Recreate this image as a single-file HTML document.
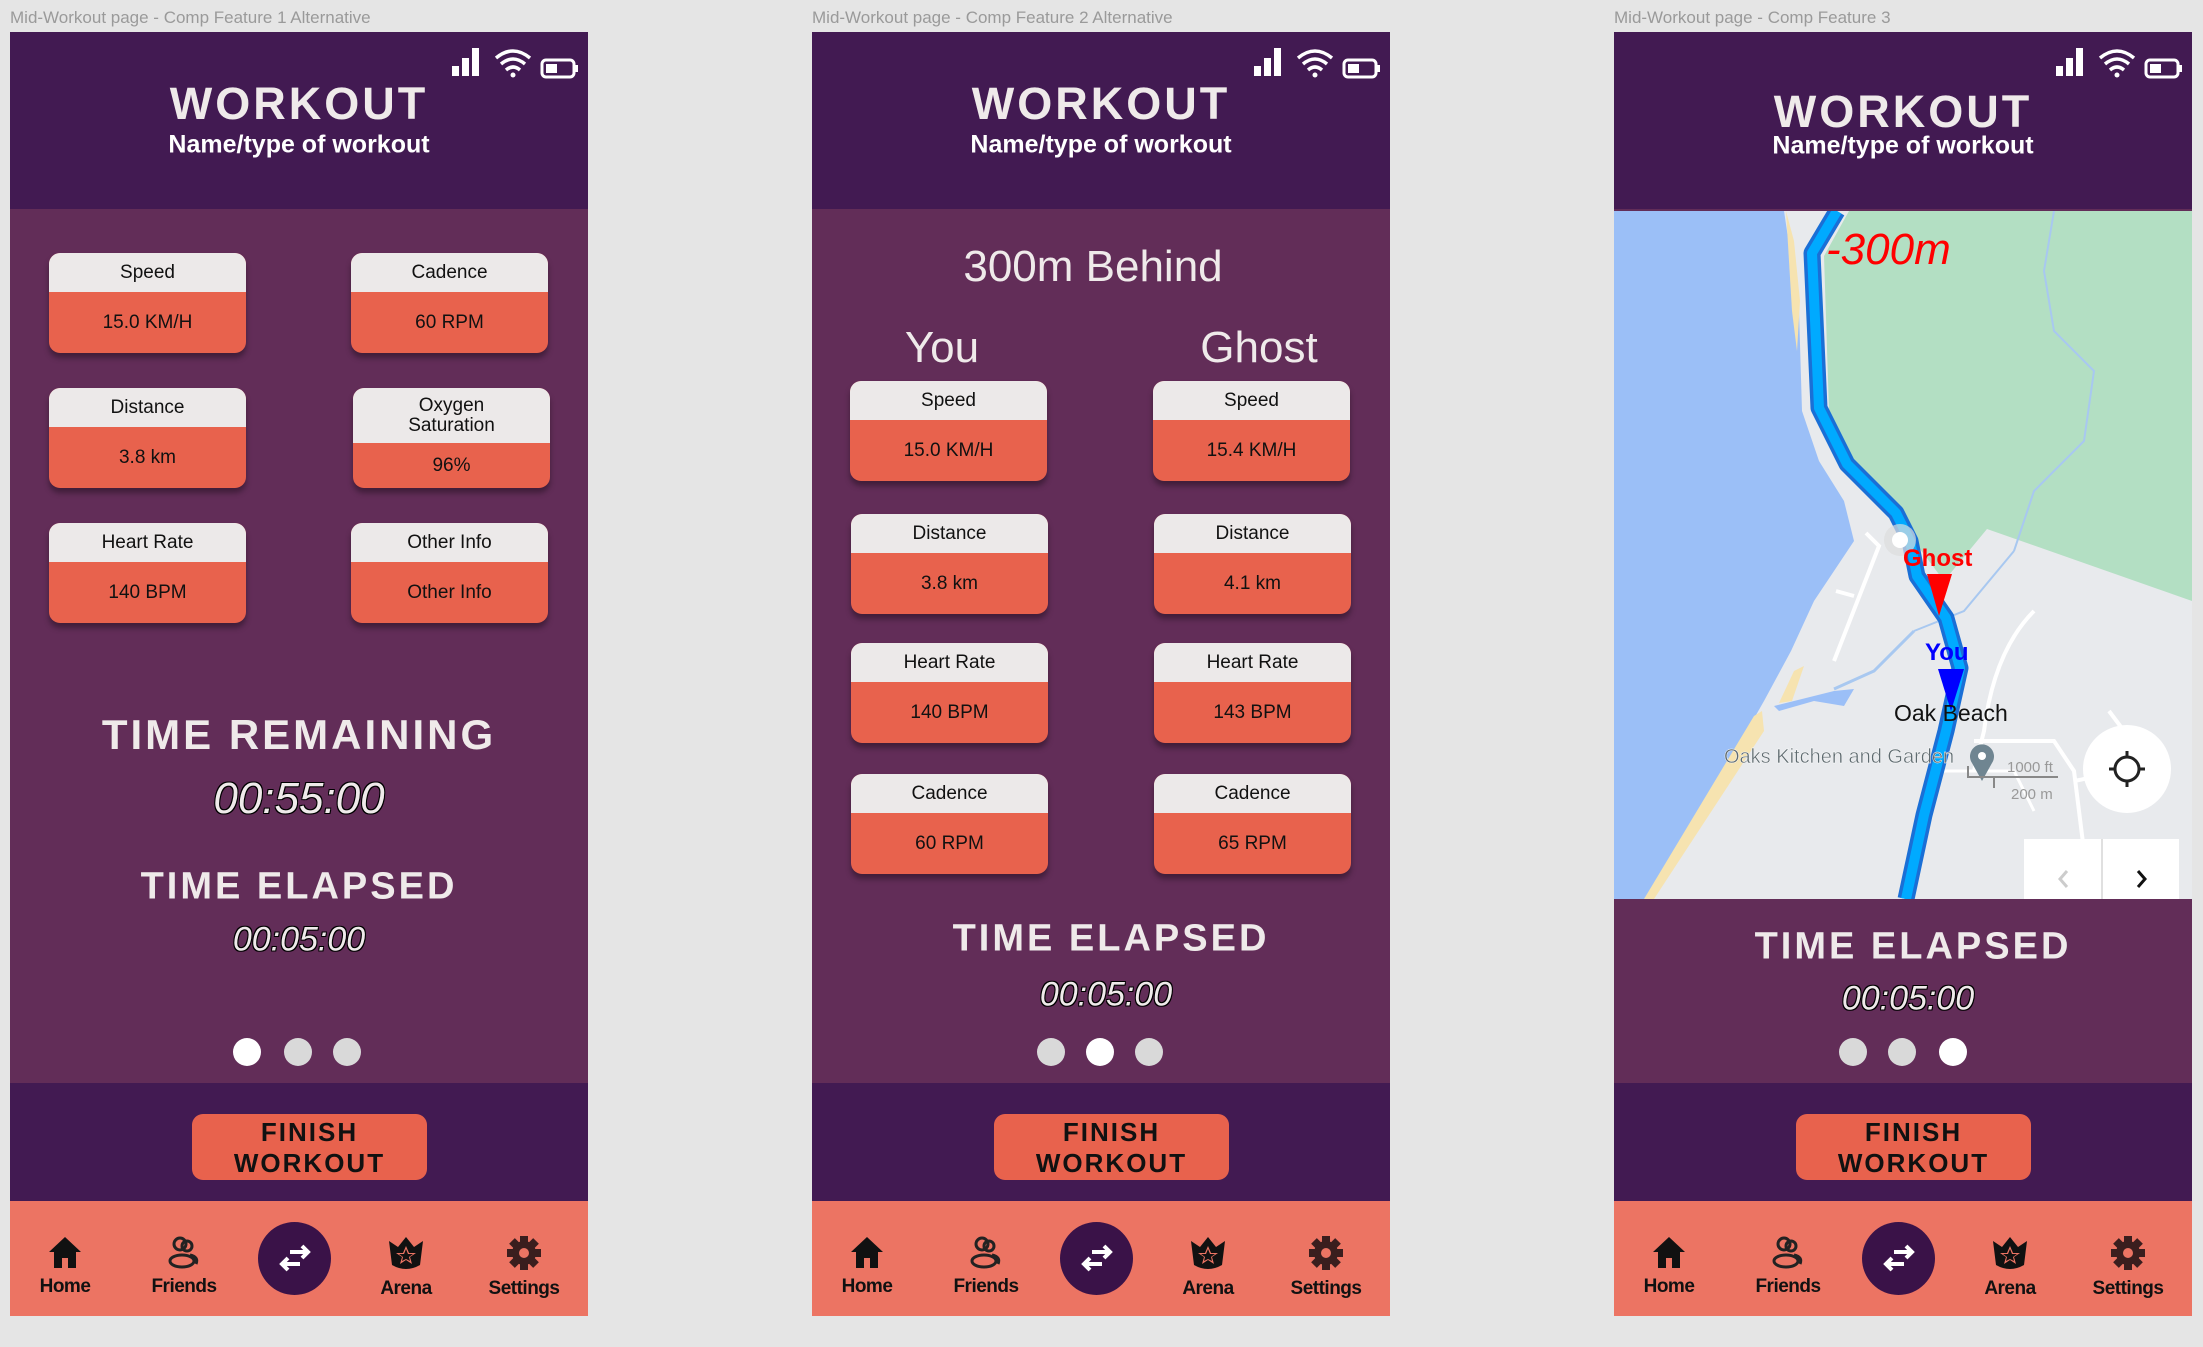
<!DOCTYPE html>
<html><head><meta charset="utf-8"><style>
*{margin:0;padding:0;box-sizing:border-box}
body{width:2203px;height:1347px;background:#e5e5e5;position:relative;overflow:hidden;font-family:"Liberation Sans",sans-serif}
.lbl{position:absolute;top:8px;font-size:17px;color:#9a9a9a}
.fr{position:absolute;top:32px;width:578px;height:1284px;overflow:hidden;background:#622d58}
.hd{position:absolute;left:0;top:0;width:578px;height:177px;background:#421a52}
.band{position:absolute;left:0;top:1051px;width:578px;height:118px;background:#421a52}
.nav{position:absolute;left:0;top:1169px;width:578px;height:115px;background:#ec7463}
.t{position:absolute;left:0;width:100%;text-align:center;transform:translateY(-50%);white-space:nowrap}
.title{font-size:45px;font-weight:900;color:#efeaea;letter-spacing:3px}
.sub{font-size:25px;font-weight:bold;color:#fff}
.big{font-size:42px;font-weight:900;color:#efeaea;letter-spacing:3px}
.tm{font-style:italic;color:#efeaea;text-shadow:-1px -1px 0 #000,1px -1px 0 #000,-1px 1px 0 #000,1px 1px 0 #000}
.card{position:absolute;width:197px;height:100px;border-radius:11px;overflow:hidden;background:#e8624d;box-shadow:0 5px 6px rgba(0,0,0,.35)}
.card .h{background:#ece9e9;height:39px;display:flex;align-items:center;justify-content:center;font-size:19px;color:#111;text-align:center;line-height:20px}
.card .v{height:61px;display:flex;align-items:center;justify-content:center;font-size:19px;color:#111}
.dot{position:absolute;width:28px;height:28px;border-radius:50%;background:#d9d9d9;top:1006px}
.dot.a{background:#fff}
.fin{position:absolute;left:182px;top:1082px;width:235px;height:66px;border-radius:11px;background:#e8624d;text-align:center;font-weight:900;font-size:26px;line-height:31px;color:#111;letter-spacing:2px;padding-top:3px}
.ni{position:absolute;top:1203px;width:90px;text-align:center}
.ni span{display:block;font-weight:bold;font-size:19px;color:#111;letter-spacing:-0.5px;margin-top:2px}
.sw{position:absolute;left:248px;top:1190px;width:73px;height:73px;border-radius:50%;background:#3a1248}
</style></head><body>

<div class="lbl" style="left:10px">Mid-Workout page - Comp Feature 1 Alternative</div>
<div class="lbl" style="left:812px">Mid-Workout page - Comp Feature 2 Alternative</div>
<div class="lbl" style="left:1614px">Mid-Workout page - Comp Feature 3</div>

<!-- FRAME 1 -->
<div class="fr" style="left:10px">
 <div class="hd"></div>
 <svg style="position:absolute;left:432px;top:10px" width="140" height="40" viewBox="0 0 140 40">
  <rect x="10" y="24" width="7" height="10" fill="#fff"/><rect x="20" y="16" width="7" height="18" fill="#fff"/><rect x="30" y="6" width="7" height="28" fill="#fff"/>
  <path d="M54 16 Q71 2 88 16" stroke="#fff" stroke-width="3.5" fill="none"/><path d="M59 22 Q71 12 83 22" stroke="#fff" stroke-width="3.5" fill="none"/><path d="M64 28 Q71 22 78 28" stroke="#fff" stroke-width="3.5" fill="none"/><circle cx="71" cy="33" r="2.5" fill="#fff"/>
  <rect x="100" y="18" width="32" height="17" rx="4" stroke="#fff" stroke-width="3" fill="none"/><rect x="104" y="22" width="11" height="9" fill="#fff"/><rect x="133" y="23" width="3" height="7" fill="#fff"/>
 </svg>
 <div class="t title" style="top:72px">WORKOUT</div>
 <div class="t sub" style="top:113px">Name/type of workout</div>

 <div class="card" style="left:39px;top:221px"><div class="h">Speed</div><div class="v">15.0 KM/H</div></div>
 <div class="card" style="left:341px;top:221px"><div class="h">Cadence</div><div class="v">60 RPM</div></div>
 <div class="card" style="left:39px;top:356px"><div class="h">Distance</div><div class="v">3.8 km</div></div>
 <div class="card" style="left:343px;top:356px"><div class="h" style="height:55px">Oxygen<br>Saturation</div><div class="v" style="height:45px">96%</div></div>
 <div class="card" style="left:39px;top:491px"><div class="h">Heart Rate</div><div class="v">140 BPM</div></div>
 <div class="card" style="left:341px;top:491px"><div class="h">Other Info</div><div class="v">Other Info</div></div>

 <div class="t big" style="top:703px">TIME REMAINING</div>
 <div class="t tm" style="top:767px;font-size:44px">00:55:00</div>
 <div class="t big" style="top:855px;font-size:38px">TIME ELAPSED</div>
 <div class="t tm" style="top:908px;font-size:34px">00:05:00</div>
 <div class="dot a" style="left:223px"></div><div class="dot" style="left:274px"></div><div class="dot" style="left:323px"></div>
 <div class="band"></div>
 <div class="fin">FINISH<br>WORKOUT</div>
 <div class="nav"></div>
 <div class="ni" style="left:10px"><svg width="36" height="34" viewBox="0 0 36 34"><path d="M18 2 L34 17 L29 17 L29 33 L21 33 L21 23 L15 23 L15 33 L7 33 L7 17 L2 17 Z" fill="#111"/></svg><span>Home</span></div>
 <div class="ni" style="left:129px"><svg width="36" height="34" viewBox="0 0 36 34"><circle cx="14" cy="9" r="6" stroke="#222" stroke-width="3" fill="none"/><circle cx="21" cy="11" r="5" stroke="#222" stroke-width="3" fill="none"/><ellipse cx="16" cy="26" rx="12" ry="6" stroke="#222" stroke-width="3" fill="none"/><path d="M24 20 Q33 22 30 29" stroke="#222" stroke-width="3" fill="none"/></svg><span>Friends</span></div>
 <div class="sw"><svg width="73" height="73" viewBox="0 0 73 73"><path d="M32 30 L50 30 M44 24 L50 30 L44 36" stroke="#fff" stroke-width="4" fill="none"/><path d="M42 42 L24 42 M30 36 L24 42 L30 48" stroke="#fff" stroke-width="4" fill="none"/></svg></div>
 <div class="ni" style="left:351px"><svg width="40" height="36" viewBox="0 0 40 36"><path d="M3 6 L12 12 L20 2 L28 12 L37 6 L34 30 Q20 38 6 30 Z" fill="#111"/><path d="M20 11 L23 18 L30 18 L24 22 L26 29 L20 25 L14 29 L16 22 L10 18 L17 18 Z" fill="#ec7463"/><path d="M20 14 L22 19 L27 19 L23 22 L24 26 L20 24 L16 26 L17 22 L13 19 L18 19 Z" fill="#111"/></svg><span>Arena</span></div>
 <div class="ni" style="left:469px"><svg width="36" height="36" viewBox="0 0 36 36"><g fill="#3a1e1e"><circle cx="18" cy="18" r="12"/><rect x="14" y="1" width="8" height="34"/><rect x="1" y="14" width="34" height="8"/><rect x="14" y="1" width="8" height="34" transform="rotate(45 18 18)"/><rect x="14" y="1" width="8" height="34" transform="rotate(-45 18 18)"/></g><circle cx="18" cy="18" r="5" fill="#ec7463"/></svg><span>Settings</span></div>
</div>

<!-- FRAME 2 -->
<div class="fr" style="left:812px">
 <div class="hd"></div>
 <svg style="position:absolute;left:432px;top:10px" width="140" height="40" viewBox="0 0 140 40">
  <rect x="10" y="24" width="7" height="10" fill="#fff"/><rect x="20" y="16" width="7" height="18" fill="#fff"/><rect x="30" y="6" width="7" height="28" fill="#fff"/>
  <path d="M54 16 Q71 2 88 16" stroke="#fff" stroke-width="3.5" fill="none"/><path d="M59 22 Q71 12 83 22" stroke="#fff" stroke-width="3.5" fill="none"/><path d="M64 28 Q71 22 78 28" stroke="#fff" stroke-width="3.5" fill="none"/><circle cx="71" cy="33" r="2.5" fill="#fff"/>
  <rect x="100" y="18" width="32" height="17" rx="4" stroke="#fff" stroke-width="3" fill="none"/><rect x="104" y="22" width="11" height="9" fill="#fff"/><rect x="133" y="23" width="3" height="7" fill="#fff"/>
 </svg>
 <div class="t title" style="top:72px">WORKOUT</div>
 <div class="t sub" style="top:113px">Name/type of workout</div>
 <div class="t" style="top:235px;left:-8px;font-size:44px;color:#efeaea">300m Behind</div>
 <div class="t" style="top:316px;left:-159px;font-size:44px;color:#efeaea">You</div>
 <div class="t" style="top:316px;left:158px;font-size:44px;color:#efeaea">Ghost</div>

 <div class="card" style="left:38px;top:349px"><div class="h">Speed</div><div class="v">15.0 KM/H</div></div>
 <div class="card" style="left:341px;top:349px"><div class="h">Speed</div><div class="v">15.4 KM/H</div></div>
 <div class="card" style="left:39px;top:482px"><div class="h">Distance</div><div class="v">3.8 km</div></div>
 <div class="card" style="left:342px;top:482px"><div class="h">Distance</div><div class="v">4.1 km</div></div>
 <div class="card" style="left:39px;top:611px"><div class="h">Heart Rate</div><div class="v">140 BPM</div></div>
 <div class="card" style="left:342px;top:611px"><div class="h">Heart Rate</div><div class="v">143 BPM</div></div>
 <div class="card" style="left:39px;top:742px"><div class="h">Cadence</div><div class="v">60 RPM</div></div>
 <div class="card" style="left:342px;top:742px"><div class="h">Cadence</div><div class="v">65 RPM</div></div>

 <div class="t big" style="top:907px;left:10px;font-size:38px">TIME ELAPSED</div>
 <div class="t tm" style="top:963px;left:5px;font-size:34px">00:05:00</div>
 <div class="dot" style="left:225px"></div><div class="dot a" style="left:274px"></div><div class="dot" style="left:323px"></div>
 <div class="band"></div>
 <div class="fin">FINISH<br>WORKOUT</div>
 <div class="nav"></div>
 <div class="ni" style="left:10px"><svg width="36" height="34" viewBox="0 0 36 34"><path d="M18 2 L34 17 L29 17 L29 33 L21 33 L21 23 L15 23 L15 33 L7 33 L7 17 L2 17 Z" fill="#111"/></svg><span>Home</span></div>
 <div class="ni" style="left:129px"><svg width="36" height="34" viewBox="0 0 36 34"><circle cx="14" cy="9" r="6" stroke="#222" stroke-width="3" fill="none"/><circle cx="21" cy="11" r="5" stroke="#222" stroke-width="3" fill="none"/><ellipse cx="16" cy="26" rx="12" ry="6" stroke="#222" stroke-width="3" fill="none"/><path d="M24 20 Q33 22 30 29" stroke="#222" stroke-width="3" fill="none"/></svg><span>Friends</span></div>
 <div class="sw"><svg width="73" height="73" viewBox="0 0 73 73"><path d="M32 30 L50 30 M44 24 L50 30 L44 36" stroke="#fff" stroke-width="4" fill="none"/><path d="M42 42 L24 42 M30 36 L24 42 L30 48" stroke="#fff" stroke-width="4" fill="none"/></svg></div>
 <div class="ni" style="left:351px"><svg width="40" height="36" viewBox="0 0 40 36"><path d="M3 6 L12 12 L20 2 L28 12 L37 6 L34 30 Q20 38 6 30 Z" fill="#111"/><path d="M20 11 L23 18 L30 18 L24 22 L26 29 L20 25 L14 29 L16 22 L10 18 L17 18 Z" fill="#ec7463"/><path d="M20 14 L22 19 L27 19 L23 22 L24 26 L20 24 L16 26 L17 22 L13 19 L18 19 Z" fill="#111"/></svg><span>Arena</span></div>
 <div class="ni" style="left:469px"><svg width="36" height="36" viewBox="0 0 36 36"><g fill="#3a1e1e"><circle cx="18" cy="18" r="12"/><rect x="14" y="1" width="8" height="34"/><rect x="1" y="14" width="34" height="8"/><rect x="14" y="1" width="8" height="34" transform="rotate(45 18 18)"/><rect x="14" y="1" width="8" height="34" transform="rotate(-45 18 18)"/></g><circle cx="18" cy="18" r="5" fill="#ec7463"/></svg><span>Settings</span></div>
</div>

<!-- FRAME 3 -->
<div class="fr" style="left:1614px">
 <div class="hd"></div>
 <svg style="position:absolute;left:432px;top:10px" width="140" height="40" viewBox="0 0 140 40">
  <rect x="10" y="24" width="7" height="10" fill="#fff"/><rect x="20" y="16" width="7" height="18" fill="#fff"/><rect x="30" y="6" width="7" height="28" fill="#fff"/>
  <path d="M54 16 Q71 2 88 16" stroke="#fff" stroke-width="3.5" fill="none"/><path d="M59 22 Q71 12 83 22" stroke="#fff" stroke-width="3.5" fill="none"/><path d="M64 28 Q71 22 78 28" stroke="#fff" stroke-width="3.5" fill="none"/><circle cx="71" cy="33" r="2.5" fill="#fff"/>
  <rect x="100" y="18" width="32" height="17" rx="4" stroke="#fff" stroke-width="3" fill="none"/><rect x="104" y="22" width="11" height="9" fill="#fff"/><rect x="133" y="23" width="3" height="7" fill="#fff"/>
 </svg>
 <div class="t title" style="top:80px">WORKOUT</div>
 <div class="t sub" style="top:114px">Name/type of workout</div>

 <svg style="position:absolute;left:0;top:179px" width="578" height="688" viewBox="0 0 578 688">
  <rect width="578" height="688" fill="#e8eaed"/>
  <path d="M0 0 L170 0 L185 100 L188 200 L205 250 L230 290 L240 330 L200 390 L177 440 L150 490 L37 688 L0 688 Z" fill="#9bbff7"/>
  <path d="M180 460 L190 455 L178 490 L165 492 Z" fill="#f6e3b0"/>
  <path d="M140 505 L148 500 L150 520 L40 688 L30 688 Z" fill="#f6e3b0"/>
  <path d="M172 0 L180 30 L186 90 L183 140 L178 100 Z" fill="#f6e3b0"/>
  <path d="M160 495 L220 480 L240 478 L230 495 L200 490 L165 500 Z" fill="#9bbff7"/>
  <path d="M235 0 L578 0 L578 390 L373 318 L330 370 L300 330 L240 255 L215 200 L210 45 Z" fill="#b3dfc3"/>
  <path d="M440 0 L430 60 L440 120 L480 160 L470 230 L420 280 L400 340" stroke="#a8c8f0" stroke-width="2" fill="none"/>
  <path d="M300 420 L350 400 L400 340" stroke="#a8c8f0" stroke-width="2" fill="none"/>
  <path d="M220 478 L260 460 L300 420" stroke="#a8c8f0" stroke-width="3" fill="none"/>
  <path d="M420 400 Q380 440 370 520 L360 560" stroke="#fff" stroke-width="4" fill="none"/>
  <path d="M252 322 L265 335 L220 450 M240 385 L222 380 M360 530 L440 530 L460 560 L470 640 M460 570 Q520 560 510 520 L495 500" stroke="#fff" stroke-width="4" fill="none"/>
  <path d="M330 560 L400 560 L420 600" stroke="#fff" stroke-width="3" fill="none"/>
  <polyline points="223,0 198,42 205,197 233,253 282,302 296,330 303,365 332,407 346,457 332,520 310,604 292,688" stroke="#1a6fd6" stroke-width="17" fill="none" stroke-linejoin="round"/>
  <polyline points="223,0 198,42 205,197 233,253 282,302 296,330 303,365 332,407 346,457 332,520 310,604 292,688" stroke="#00aaff" stroke-width="10" fill="none" stroke-linejoin="round"/>
  <circle cx="286" cy="329" r="16" fill="#ddd" opacity=".7"/><circle cx="286" cy="329" r="8" fill="#fff"/>
  <text x="212" y="53" font-family="Liberation Sans" font-style="italic" font-size="44" fill="#f00">-300m</text>
  <text x="289" y="355" font-family="Liberation Sans" font-weight="bold" font-size="24" fill="#f00">Ghost</text>
  <path d="M313 363 L338 363 L325 405 Z" fill="#f00"/>
  <text x="311" y="449" font-family="Liberation Sans" font-weight="bold" font-size="24" fill="#00f">You</text>
  <path d="M324 458 L350 458 L337 500 Z" fill="#00f"/>
  <text x="280" y="510" font-family="Liberation Sans" font-size="23" fill="#111">Oak Beach</text>
  <text x="110" y="552" font-family="Liberation Sans" font-size="20" fill="#5f6b70" stroke="#fff" stroke-width=".4">Oaks Kitchen and Garden</text>
  <path d="M368 570 L358 552 A12 12 0 1 1 378 552 Z" fill="#6f8591"/><circle cx="368" cy="545" r="4" fill="#fff"/>
  <path d="M354 555 L354 566 L444 566 M380 566 L380 577" stroke="#888" stroke-width="2" fill="none"/>
  <text x="393" y="561" font-family="Liberation Sans" font-size="15" fill="#999">1000 ft</text>
  <text x="397" y="588" font-family="Liberation Sans" font-size="15" fill="#999">200 m</text>
  <circle cx="513" cy="558" r="44" fill="#fff"/>
  <circle cx="513" cy="558" r="12" stroke="#222" stroke-width="3" fill="none"/>
  <path d="M513 540 L513 546 M513 570 L513 576 M495 558 L501 558 M525 558 L531 558" stroke="#222" stroke-width="3"/>
  <rect x="410" y="628" width="155" height="60" fill="#fff"/>
  <line x1="488" y1="628" x2="488" y2="688" stroke="#e0e0e0" stroke-width="2"/>
  <path d="M453 660 L446 668 L453 676" stroke="#ccc" stroke-width="3" fill="none"/>
  <path d="M524 660 L531 668 L524 676" stroke="#111" stroke-width="3" fill="none"/>
 </svg>

 <div class="t big" style="top:915px;left:10px;font-size:38px">TIME ELAPSED</div>
 <div class="t tm" style="top:967px;left:5px;font-size:34px">00:05:00</div>
 <div class="dot" style="left:225px"></div><div class="dot" style="left:274px"></div><div class="dot a" style="left:325px"></div>
 <div class="band"></div>
 <div class="fin">FINISH<br>WORKOUT</div>
 <div class="nav"></div>
 <div class="ni" style="left:10px"><svg width="36" height="34" viewBox="0 0 36 34"><path d="M18 2 L34 17 L29 17 L29 33 L21 33 L21 23 L15 23 L15 33 L7 33 L7 17 L2 17 Z" fill="#111"/></svg><span>Home</span></div>
 <div class="ni" style="left:129px"><svg width="36" height="34" viewBox="0 0 36 34"><circle cx="14" cy="9" r="6" stroke="#222" stroke-width="3" fill="none"/><circle cx="21" cy="11" r="5" stroke="#222" stroke-width="3" fill="none"/><ellipse cx="16" cy="26" rx="12" ry="6" stroke="#222" stroke-width="3" fill="none"/><path d="M24 20 Q33 22 30 29" stroke="#222" stroke-width="3" fill="none"/></svg><span>Friends</span></div>
 <div class="sw"><svg width="73" height="73" viewBox="0 0 73 73"><path d="M32 30 L50 30 M44 24 L50 30 L44 36" stroke="#fff" stroke-width="4" fill="none"/><path d="M42 42 L24 42 M30 36 L24 42 L30 48" stroke="#fff" stroke-width="4" fill="none"/></svg></div>
 <div class="ni" style="left:351px"><svg width="40" height="36" viewBox="0 0 40 36"><path d="M3 6 L12 12 L20 2 L28 12 L37 6 L34 30 Q20 38 6 30 Z" fill="#111"/><path d="M20 11 L23 18 L30 18 L24 22 L26 29 L20 25 L14 29 L16 22 L10 18 L17 18 Z" fill="#ec7463"/><path d="M20 14 L22 19 L27 19 L23 22 L24 26 L20 24 L16 26 L17 22 L13 19 L18 19 Z" fill="#111"/></svg><span>Arena</span></div>
 <div class="ni" style="left:469px"><svg width="36" height="36" viewBox="0 0 36 36"><g fill="#3a1e1e"><circle cx="18" cy="18" r="12"/><rect x="14" y="1" width="8" height="34"/><rect x="1" y="14" width="34" height="8"/><rect x="14" y="1" width="8" height="34" transform="rotate(45 18 18)"/><rect x="14" y="1" width="8" height="34" transform="rotate(-45 18 18)"/></g><circle cx="18" cy="18" r="5" fill="#ec7463"/></svg><span>Settings</span></div>
</div>
</body></html>
